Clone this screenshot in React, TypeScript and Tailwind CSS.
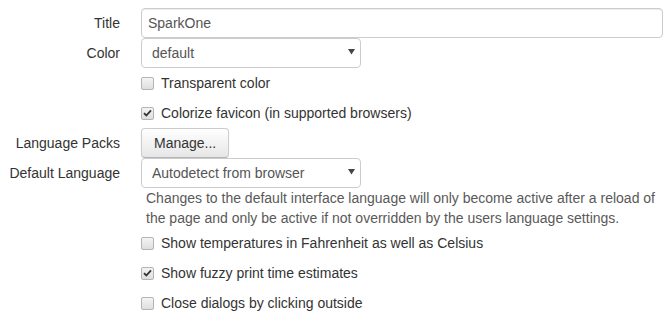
import { ReactNode } from 'react'

function Label({ children }: { children: ReactNode }) {
  return <label className="w-[141px] shrink-0 pr-[21px] pt-[5px] text-right">{children}</label>
}

function Select({ value }: { value: string }) {
  return (
    <div className="relative h-[30px] w-[220px] rounded-[4px] border border-[#ccc] bg-white">
      <div className="pl-[10px] pt-[4px] text-[#555]">{value}</div>
      <svg className="absolute right-[5px] top-[10px]" width="7" height="6" viewBox="0 0 7 6">
        <path d="M0 0h7L3.5 5.5z" fill="#444" />
      </svg>
    </div>
  )
}

function Checkbox({ checked, children }: { checked?: boolean; children: ReactNode }) {
  return (
    <div className="flex h-[30px] items-center pl-[141px]">
      <span className="flex h-[13px] w-[13px] items-center justify-center rounded-[2px] border border-[#b4b4b4] bg-gradient-to-b from-[#f4f4f4] to-[#dedede]">
        {checked && (
          <svg width="9" height="8" viewBox="0 0 9 8">
            <path d="M1 4.2l2.3 2.3L8 1.3" stroke="#333" strokeWidth="1.8" fill="none" />
          </svg>
        )}
      </span>
      <span className="ml-[7px]">{children}</span>
    </div>
  )
}

export default function App() {
  return (
    <div className="bg-white pt-[8px] font-['Liberation_Sans',Arial,sans-serif] text-[14px] leading-5 text-[#333]">
      <div className="flex">
        <Label>Title</Label>
        <div className="h-[30px] w-[522px] rounded-[4px] border border-[#ccc] bg-white px-[6px] pt-[4px] text-[#555] shadow-[inset_0_1px_1px_rgba(0,0,0,0.075)]">
          SparkOne
        </div>
      </div>
      <div className="flex">
        <Label>Color</Label>
        <Select value="default" />
      </div>
      <Checkbox>Transparent color</Checkbox>
      <Checkbox checked>Colorize favicon (in supported browsers)</Checkbox>
      <div className="flex">
        <Label>Language Packs</Label>
        <button
          type="button"
          className="h-[30px] w-[88px] rounded-[4px] border border-[#ccc] border-b-[#b3b3b3] bg-gradient-to-b from-white to-[#e6e6e6] px-3 text-[#333] shadow-[inset_0_1px_0_rgba(255,255,255,0.2),0_1px_2px_rgba(0,0,0,0.05)]"
        >
          Manage...
        </button>
      </div>
      <div className="flex">
        <Label>Default Language</Label>
        <Select value="Autodetect from browser" />
      </div>
      <div className="pl-[146px] text-[#595959]">
        Changes to the default interface language will only become active after a reload of the page and only be active if
        not overridden by the users language settings.
      </div>
      <Checkbox>Show temperatures in Fahrenheit as well as Celsius</Checkbox>
      <Checkbox checked>Show fuzzy print time estimates</Checkbox>
      <Checkbox>Close dialogs by clicking outside</Checkbox>
    </div>
  )
}
